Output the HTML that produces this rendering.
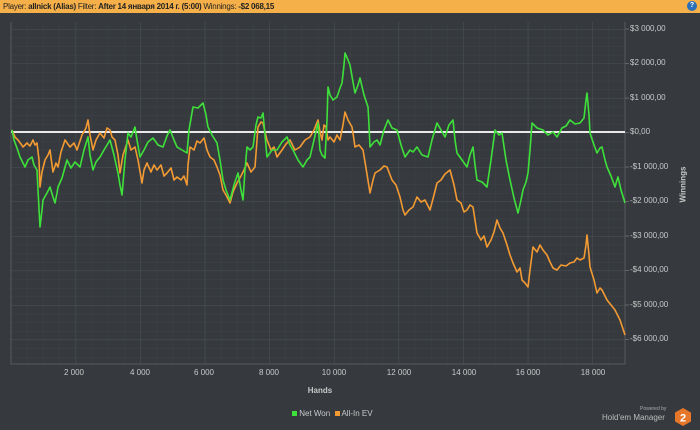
<!DOCTYPE html>
<html><head><meta charset="utf-8"><style>
body{margin:0;width:700px;height:430px;background:#363a3e;font-family:"Liberation Sans",sans-serif;overflow:hidden;position:relative}
.top{position:absolute;left:0;top:0;width:700px;height:13px;background:#f5b04a;font-size:8px;line-height:13px;color:#222;padding-left:3px;box-sizing:border-box;letter-spacing:-0.25px}
.top b{font-weight:bold}
.help{position:absolute;right:3px;top:1px;width:10px;height:10px;border-radius:50%;background:#2a6fb8;color:#fff;font-size:7px;line-height:10px;text-align:center;font-weight:bold}
.lbl{position:absolute;color:#c8c8c8;font-size:8px}
</style></head><body>
<div class="top">Player: <b>allnick (Alias)</b> Filter: <b>After 14 января 2014 г. (5:00)</b> Winnings: <b>-$2 068,15</b></div>
<div class="help">?</div>
<svg width="700" height="430" style="position:absolute;left:0;top:0">
<defs><pattern id="mh" width="16.15" height="8.63" patternUnits="userSpaceOnUse" x="11" y="29"><path d="M0 0H16.15M0 0V8.63" stroke="#41464b" stroke-width="0.6" fill="none"/></pattern>
<pattern id="MH" width="64.6" height="34.5" patternUnits="userSpaceOnUse" x="11" y="29"><path d="M0 0H64.6M0 0V34.5" stroke="#4b5055" stroke-width="1" fill="none"/></pattern></defs>
<rect x="11" y="22" width="614" height="342" fill="url(#mh)"/>
<rect x="11" y="22" width="614" height="342" fill="url(#MH)"/>
<path d="M11 22V364H625V22" stroke="#555a5f" fill="none"/>
<line x1="11" y1="132" x2="625" y2="132" stroke="#e8e8e8" stroke-width="2"/>
<polyline fill="none" stroke="#f39a32" stroke-width="1.6" stroke-linejoin="round" points="12,130 15,137 18,140 21,144 23,147 27,143 30,146 33,140 35,145 37,143 39,160 40,187 42,172 45,160 48,155 50,150 52,165 53,172 56,163 58,167 61,152 65,140 70,147 74,143 77,150 82,135 86,128 88,120 90,135 93,150 96,140 100,133 104,138 107,128 110,130 112,137 115,140 118,155 120,173 123,155 128,140 131,150 135,147 138,160 142,183 144,170 147,163 151,172 154,165 157,170 161,165 164,176 167,173 171,168 174,180 177,177 181,180 184,176 187,185 188,165 190,147 194,150 197,141 200,143 204,138 207,150 210,157 214,160 217,167 220,175 223,190 226,195 230,203 233,192 237,183 241,176 244,170 247,163 251,172 255,167 257,140 258,127 261,122 263,123 265,132 267,140 271,150 274,147 277,157 282,150 286,144 290,140 295,150 300,147 305,140 310,137 314,130 318,120 320,132 322,140 324,125 326,127 328,140 330,137 334,142 337,135 340,140 343,125 345,112 348,120 352,127 354,140 355,147 359,145 363,150 366,168 370,193 373,180 375,173 380,170 384,166 387,167 392,180 396,185 400,197 403,210 405,215 409,210 413,207 417,197 421,202 425,200 428,206 430,210 434,195 437,183 441,180 445,174 450,170 454,185 457,200 461,203 464,212 467,210 470,205 473,207 475,220 477,233 481,240 484,236 487,247 491,240 494,232 497,220 500,228 503,233 507,245 510,255 513,263 517,272 520,268 522,280 525,283 528,287 530,270 533,247 537,252 540,245 543,250 547,255 550,262 553,268 557,270 561,265 566,266 570,263 574,262 577,258 580,260 584,258 586,245 587,235 589,255 590,267 594,280 597,293 600,288 602,290 605,296 607,300 611,305 615,310 617,314 620,320 622,326 625,335"/>
<polyline fill="none" stroke="#3ee03a" stroke-width="1.6" stroke-linejoin="round" points="12,130 14,140 17,148 20,157 23,163 25,167 28,160 32,157 34,165 37,170 38,190 40,227 42,210 43,200 47,193 50,187 53,197 55,203 57,193 58,187 62,178 67,160 71,168 75,162 80,167 84,150 88,137 90,155 93,170 96,162 100,157 104,150 107,145 110,140 114,155 118,173 120,185 122,195 125,160 128,133 131,137 135,127 137,140 140,157 144,150 148,142 153,138 158,145 163,147 167,136 170,130 174,140 177,147 182,150 187,153 189,130 193,107 198,108 203,103 206,115 208,127 212,135 217,143 220,160 223,180 226,190 230,200 234,185 238,173 241,190 243,200 245,170 247,147 250,150 253,147 256,125 258,117 261,118 263,113 265,135 267,157 272,150 277,150 282,142 287,137 290,145 293,150 298,160 303,167 307,160 310,157 314,140 318,123 320,150 322,155 325,158 327,120 328,87 330,95 333,100 337,97 340,88 342,83 344,65 345,53 348,60 350,65 353,82 355,93 358,85 360,78 364,95 368,107 369,125 370,147 374,142 377,140 380,145 384,130 388,120 392,128 397,130 401,145 405,157 410,150 413,152 417,147 422,155 428,157 432,140 437,123 441,130 445,137 449,125 453,120 455,140 457,153 462,160 467,167 470,155 473,147 475,165 477,180 482,182 487,187 491,160 495,130 499,135 502,133 506,160 510,180 514,198 518,213 521,200 523,190 526,182 528,173 530,150 532,123 537,128 543,130 548,135 553,132 557,137 562,128 566,126 570,120 575,124 580,123 584,118 586,100 587,93 589,115 590,133 594,145 597,153 600,148 602,147 605,160 607,167 611,176 615,187 617,180 618,177 621,190 625,203"/>
<g stroke="#666" stroke-width="1"><path d="M625 29h4M625 63.5h4M625 98h4M625 132.5h4M625 167h4M625 201.5h4M625 236h4M625 270.5h4M625 305h4M625 339.5h4"/></g>
</svg>
<div class="lbl" style="left:630px;top:24px">$3 000,00</div>
<div class="lbl" style="left:630px;top:58px">$2 000,00</div>
<div class="lbl" style="left:630px;top:93px">$1 000,00</div>
<div class="lbl" style="left:630px;top:127px">$0,00</div>
<div class="lbl" style="left:630px;top:162px">-$1 000,00</div>
<div class="lbl" style="left:630px;top:196px">-$2 000,00</div>
<div class="lbl" style="left:630px;top:231px">-$3 000,00</div>
<div class="lbl" style="left:630px;top:265px">-$4 000,00</div>
<div class="lbl" style="left:630px;top:300px">-$5 000,00</div>
<div class="lbl" style="left:630px;top:334px">-$6 000,00</div>
<div class="lbl" style="left:658px;top:180px;transform:rotate(-90deg);font-weight:bold;width:50px;text-align:center">Winnings</div>
<div class="lbl" style="left:54px;top:368px;width:40px;text-align:center">2 000</div>
<div class="lbl" style="left:120px;top:368px;width:40px;text-align:center">4 000</div>
<div class="lbl" style="left:184px;top:368px;width:40px;text-align:center">6 000</div>
<div class="lbl" style="left:249px;top:368px;width:40px;text-align:center">8 000</div>
<div class="lbl" style="left:314px;top:368px;width:40px;text-align:center">10 000</div>
<div class="lbl" style="left:379px;top:368px;width:40px;text-align:center">12 000</div>
<div class="lbl" style="left:444px;top:368px;width:40px;text-align:center">14 000</div>
<div class="lbl" style="left:508px;top:368px;width:40px;text-align:center">16 000</div>
<div class="lbl" style="left:573px;top:368px;width:40px;text-align:center">18 000</div>
<div class="lbl" style="left:300px;top:386px;width:40px;text-align:center;font-weight:bold">Hands</div>
<div class="lbl" style="left:292px;top:409px"><span style="display:inline-block;width:5px;height:5px;background:#3ee03a"></span> Net Won &nbsp;<span style="display:inline-block;width:5px;height:5px;background:#f39a32"></span> All-In EV</div>
<div class="lbl" style="left:640px;top:406px;font-size:5px;color:#aaa">Powered by</div>
<div class="lbl" style="left:602px;top:413px;font-size:8px;color:#bbb">Hold'em Manager</div>
<svg width="16" height="18" style="position:absolute;left:675px;top:408px"><polygon points="8,0 16,4.5 16,13.5 8,18 0,13.5 0,4.5" fill="#e6762a"/><text x="8" y="13.5" font-size="11" font-weight="bold" fill="#fff" text-anchor="middle" font-family="Liberation Sans">2</text></svg>
</body></html>
